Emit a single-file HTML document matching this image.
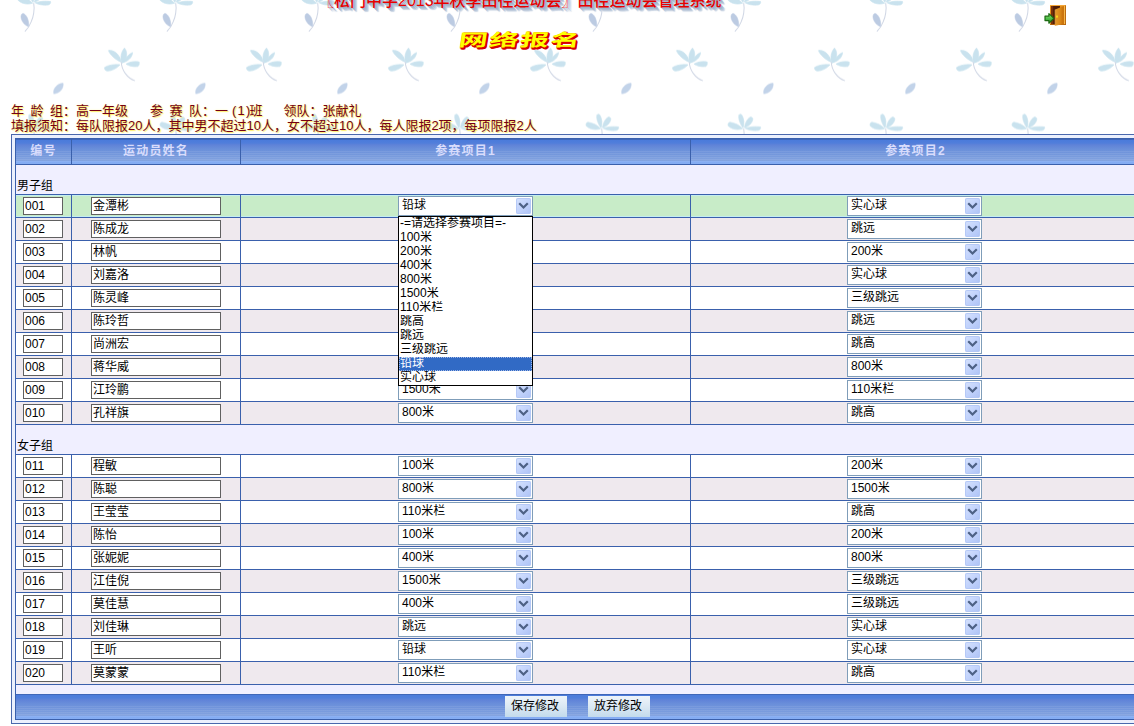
<!DOCTYPE html>
<html lang="zh-CN">
<head>
<meta charset="utf-8">
<title>网络报名</title>
<style>
html,body{margin:0;padding:0;}
body{width:1134px;height:726px;overflow:hidden;position:relative;background:#fff;
 font-family:"Liberation Sans","Noto Sans CJK SC","WenQuanYi Zen Hei",sans-serif;font-size:12px;color:#000;}
#bg{position:absolute;left:0;top:0;width:1134px;height:726px;z-index:0;}
#sys{position:absolute;left:318px;top:-9.5px;font-size:16px;font-weight:500;line-height:20px;white-space:nowrap;color:#e60000;
 text-shadow:1px 1px 0 #9fb0c8,2px 2px 0 #a9b9cf,3px 3px 0 #b7c5d8,4px 4px 1px #c8d3e2;z-index:2;}
#ttl{position:absolute;left:457px;top:29px;height:24px;z-index:2;white-space:nowrap;
 font-family:"Liberation Sans","Noto Sans CJK SC",sans-serif;font-weight:700;font-size:17px;line-height:24px;color:#ffff00;
 text-shadow:0.6px 1px 0 #d80000,1.2px 2px 0 #d40000,1.2px 1px 0 #d80000,0.6px 2px 0 #d80000,0.6px 0 0 #e02000,0 1px 0 #e02000;letter-spacing:1px;}
#ttl span{display:inline-block;transform:skewX(-9deg) scaleX(1.7);transform-origin:0 100%;}
#door{position:absolute;left:1043px;top:3px;z-index:2;}
.info{position:absolute;left:11px;white-space:nowrap;font-size:13px;line-height:15px;color:#740014;z-index:2;
 text-shadow:1px 1px 1px #ffee66,0 0 2px #fff7a8;}
.info i{font-style:normal;position:absolute;top:0;}
#i1{top:103px;height:15px;}
#i2{top:118px;height:15px;}
#box{position:absolute;left:11px;top:134px;width:1200px;height:588px;border:1px solid #4a68ad;background:#ebf0fd;z-index:1;}
table{position:absolute;left:3px;top:3px;border-collapse:separate;border-spacing:1px;background:#3a60ac;table-layout:fixed;width:1126px;}
td,th{padding:0;margin:0;overflow:hidden;}
th{height:25px;font-size:12px;font-weight:bold;color:#d8dcfc;text-align:center;vertical-align:middle;
 background-image:repeating-linear-gradient(to bottom,rgba(255,255,255,0) 0,rgba(255,255,255,0) 1px,rgba(255,255,255,.08) 1px,rgba(255,255,255,.08) 2px),linear-gradient(to bottom,#3f66b8 0,#3f66b8 1px,#4b7bdb 1px,#507edb 4px,#6083d8 6px,#6a8fda 10px,#7598dc 16px,#84a4e0 22px,#82aaf2 22.5px,#86aef4 25px);
 background-size:100% 12px,100% 100%;background-position:0 11px,0 0;background-repeat:no-repeat,no-repeat;}
th span{position:relative;top:-2.5px;letter-spacing:1.2px;}
tr.g td{height:29px;background:#f0efff;vertical-align:bottom;text-align:left;}
tr.g td span{display:block;padding-left:1px;line-height:15px;height:15px;}
tr.r td{height:22px;text-align:center;vertical-align:middle;}
tr.hl td{background:#c8ecc8;box-shadow:inset 0 1px 0 #c4edf0,inset 0 -1px 0 #c4edf0;}
tr.odd td{background:#efe9ee;}
tr.even td{background:#fff;}
input{box-sizing:border-box;height:18px;border:1px solid #606060;background:#fff;padding:0 0 0 1px;margin:0;display:block;
 font-family:"Liberation Sans","Noto Sans CJK SC","WenQuanYi Zen Hei",sans-serif;font-size:12px;line-height:16px;color:#000;outline:none;border-radius:0;}
input.no{width:40px;margin-left:7px;}
input.nm{width:130px;margin-left:19px;padding-bottom:4px;}
.sel{box-sizing:border-box;width:135px;height:20px;border:1px solid #7f9db9;background:#fff;margin:0 0 0 157px;position:relative;text-align:left;}
td.c4 .sel{margin-left:156px;}
.sv{position:absolute;left:3px;top:0px;line-height:16px;font-size:12px;white-space:nowrap;}
.sb{position:absolute;right:1px;top:1px;width:15px;height:16px;border-radius:2px;
 background:linear-gradient(135deg,#d6e2fd 0%,#c2d3fc 50%,#adc2f5 100%);box-shadow:inset 0 0 0 1px rgba(180,200,246,.9);}
.sb svg{display:block;}
tr.f td{height:34px;background:#f0efff;position:relative;}
#fg{position:absolute;left:0;right:0;bottom:0;height:25px;
 background-image:repeating-linear-gradient(to bottom,rgba(255,255,255,0) 0,rgba(255,255,255,0) 1px,rgba(255,255,255,.08) 1px,rgba(255,255,255,.08) 2px),linear-gradient(to bottom,#3f66b8 0,#3f66b8 1px,#4b7bdb 1px,#507edb 4px,#6083d8 6px,#6a8fda 10px,#7598dc 16px,#84a4e0 22px,#82aaf2 22.5px,#86aef4 25px);
 background-size:100% 12px,100% 100%;background-position:0 11px,0 0;background-repeat:no-repeat,no-repeat;}
.btn{position:absolute;top:2px;width:62px;height:21px;line-height:20px;text-align:center;box-sizing:border-box;padding-right:2px;font-size:12px;color:#000;
 background:linear-gradient(to bottom,#eef4fa 0%,#dbe8f3 50%,#c3dbec 100%);}
#dd{position:absolute;left:398px;top:216px;width:133px;height:168px;border:1px solid #000;background:#fff;z-index:5;}
#dd .o{height:14px;line-height:13px;font-size:12px;padding-left:1px;white-space:nowrap;overflow:hidden;}
#dd .on{background:#316ac5;color:#fff;outline:1px dotted #9fb6e6;outline-offset:-1px;}
</style>
</head>
<body>
<svg id="bg" width="1134" height="726" viewBox="0 0 1134 726">
 <defs>
  <pattern id="fl" x="0" y="0" width="142" height="125.5" patternUnits="userSpaceOnUse">
   <g fill="#c9e2ee" stroke="#c9e2ee" stroke-width="0.7" stroke-linejoin="round"><path d="M 32.5 3.2 C 28 4.8 22 4 18.3 0.5 C 17.5 -1.5 18.5 -3 20 -3.2 C 25 -2.5 30 0 32.5 3.2 Z"/><path d="M 33 2.5 C 30 -2 28 -7 29 -10.5 C 29.5 -11.5 31 -11.5 31.8 -10.5 C 34 -7 34.5 -2 33 2.5 Z"/><path d="M 34.5 2.2 C 35 -2 37 -6.5 40 -8.2 C 41.5 -8.8 43 -7.5 42.8 -6 C 42 -2 38.5 1 34.5 2.2 Z"/><path d="M 35.2 2.8 C 39 1.2 46 0.8 50.5 1.5 C 51 3 50 4.5 48 5 C 43 5.5 38 4.5 35.2 2.8 Z"/></g><path d="M 33.7 3.2 C 34.8 9 33.5 17 31.3 21.5 C 30 25 28 28.5 24.9 31.5" fill="none" stroke="#cfd6e4" stroke-width="1"/><path d="M 23.2 13.4 C 26 14 29.5 20 28.6 26.5 C 25 26 20.5 20.5 21 16 C 21.2 14.5 22 13.5 23.2 13.4 Z" fill="#bccbe2" stroke="#bccbe2" stroke-width="0.5"/>
   <g fill="#c9e2ee" stroke="#c9e2ee" stroke-width="0.7" stroke-linejoin="round"><path d="M 32.5 128.7 C 28 130.3 22 129.5 18.3 126 C 17.5 124 18.5 122.5 20 122.3 C 25 123 30 125.5 32.5 128.7 Z"/><path d="M 33 128 C 30 123.5 28 118.5 29 115 C 29.5 114 31 114 31.8 115 C 34 118.5 34.5 123.5 33 128 Z"/><path d="M 34.5 127.7 C 35 123.5 37 119 40 117.3 C 41.5 116.7 43 118 42.8 119.5 C 42 123.5 38.5 126.5 34.5 127.7 Z"/><path d="M 35.2 128.3 C 39 126.7 46 126.3 50.5 127 C 51 128.5 50 130 48 130.5 C 43 131 38 130 35.2 128.3 Z"/></g><path d="M 33.7 128.7 C 34.8 134.5 33.5 142.5 31.3 147 C 30 150.5 28 154 24.9 157" fill="none" stroke="#cfd6e4" stroke-width="1"/><path d="M 23.2 138.9 C 26 139.5 29.5 145.5 28.6 152 C 25 151.5 20.5 146 21 141.5 C 21.2 140 22 139 23.2 138.9 Z" fill="#bccbe2" stroke="#bccbe2" stroke-width="0.5"/>
   <g fill="#c9e2ee" stroke="#c9e2ee" stroke-width="0.7" stroke-linejoin="round">
    <path d="M121 62 C116 60 110 55 108.5 50.5 C113 49.5 120 54 121 62Z"/>
    <path d="M122 63 C120 58 121 52 124.5 48 C127 51 127.5 56 125 60 C124 62 123 63 122 63Z"/>
    <path d="M123 62.5 C125 58 129 54 132.5 52.5 C132.5 57 128 61.5 123 62.5Z"/>
    <path d="M126 64 C130 61.5 136 61 139.2 62 C139.5 64 139 66 137.5 66.5 C133 67 129 66 126 64Z"/>
    <path d="M120 64.8 C115 64 108 65 104.5 67.5 C104.5 69.5 105.5 71 107.5 71 C112 71 117 68 120 64.8Z"/>
   </g>
   <path d="M121.3 62 C121.5 70 127 78 135 80.8" fill="none" stroke="#cfd6e4" stroke-width="1"/>
   <path d="M53.8 93.8 C52.5 89 57 83.5 63.1 83.2 C64 88 60 93.5 53.8 93.8Z" fill="#c2d3e9" stroke="#c2d3e9" stroke-width="0.5"/>
  </pattern>
 </defs>
 <rect x="0" y="0" width="1134" height="726" fill="#ffffff"/>
 <rect x="0" y="0" width="1134" height="726" fill="url(#fl)"/>
</svg>

<div id="sys">〖松门中学2013年秋季田径运动会〗田径运动会管理系统</div>
<div id="ttl"><span>网络报名</span></div>

<svg id="door" width="24" height="24" viewBox="0 0 24 24">
 <defs>
  <linearGradient id="dg" x1="0" y1="0" x2="1" y2="0"><stop offset="0" stop-color="#e59a2c"/><stop offset="0.6" stop-color="#d98716"/><stop offset="1" stop-color="#c26a08"/></linearGradient>
  <linearGradient id="ag" x1="0" y1="0" x2="0" y2="1"><stop offset="0" stop-color="#9be873"/><stop offset="0.5" stop-color="#4fc04a"/><stop offset="1" stop-color="#2c9428"/></linearGradient>
 </defs>
 <rect x="7" y="2" width="16" height="20" fill="#e38d1c"/>
 <rect x="7" y="2" width="16" height="1" fill="#f3a637"/>
 <rect x="8" y="3" width="9" height="18.5" fill="#4e1d06"/>
 <rect x="8" y="3" width="2.2" height="18.5" fill="#7a2f0a"/>
 <rect x="21" y="3" width="1.3" height="18" fill="#f8b84a"/>
 <rect x="22.3" y="2.5" width="0.7" height="19.5" fill="#a85a08"/>
 <rect x="7" y="21.2" width="16" height="0.8" fill="#b4620a"/>
 <path d="M12.2 6.6 L20.8 3 L20.8 21 L12.2 22.8Z" fill="url(#dg)"/>
 <path d="M12.2 6.6 L12.2 22.8" stroke="#e9a540" stroke-width="0.8" fill="none"/>
 <rect x="13.2" y="12.6" width="1.6" height="2" fill="#ffe81a"/>
 <path d="M2 13.2 L5.9 13.2 L5.9 10.6 L10.9 15.4 L5.9 20.2 L5.9 17.6 L2 17.6Z" fill="url(#ag)" stroke="#1c6a12" stroke-width="1.2" stroke-linejoin="round"/>
</svg>

<div class="info" id="i1"><i style="left:0">年</i><i style="left:19.5px">龄</i><i style="left:39px">组：</i><i style="left:65px">高一年级</i><i style="left:139px">参</i><i style="left:158.5px">赛</i><i style="left:178px">队：</i><i style="left:204px">一</i><i style="left:221px;letter-spacing:1.2px">(1)</i><i style="left:238.5px">班</i><i style="left:272.5px">领队：</i><i style="left:311.5px">张献礼</i></div>
<div class="info" id="i2">填报须知：每队限报20人，其中男不超过10人，女不超过10人，每人限报2项，每项限报2人</div>

<div id="box">
<table cellspacing="1" cellpadding="0">
<colgroup><col style="width:55px"><col style="width:168px"><col style="width:449px"><col style="width:449px"></colgroup>
<tr><th><span>编号</span></th><th><span>运动员姓名</span></th><th><span>参赛项目1</span></th><th><span>参赛项目2</span></th></tr>
<tr class="g"><td colspan="4"><span>男子组</span></td></tr>
<tr class="r hl"><td><input class="no" type="text" value="001" readonly></td><td><input class="nm" type="text" value="金潭彬" readonly></td><td><div class="sel"><span class="sv">铅球</span><span class="sb"><svg width="15" height="16" viewBox="0 0 15 16"><path d="M4 6 L7.5 9.5 L11 6" fill="none" stroke="#4D6185" stroke-width="2.2" stroke-linecap="square"/></svg></span></div></td><td class="c4"><div class="sel"><span class="sv">实心球</span><span class="sb"><svg width="15" height="16" viewBox="0 0 15 16"><path d="M4 6 L7.5 9.5 L11 6" fill="none" stroke="#4D6185" stroke-width="2.2" stroke-linecap="square"/></svg></span></div></td></tr>
<tr class="r odd"><td><input class="no" type="text" value="002" readonly></td><td><input class="nm" type="text" value="陈成龙" readonly></td><td><div class="sel"><span class="sv"></span><span class="sb"><svg width="15" height="16" viewBox="0 0 15 16"><path d="M4 6 L7.5 9.5 L11 6" fill="none" stroke="#4D6185" stroke-width="2.2" stroke-linecap="square"/></svg></span></div></td><td class="c4"><div class="sel"><span class="sv">跳远</span><span class="sb"><svg width="15" height="16" viewBox="0 0 15 16"><path d="M4 6 L7.5 9.5 L11 6" fill="none" stroke="#4D6185" stroke-width="2.2" stroke-linecap="square"/></svg></span></div></td></tr>
<tr class="r even"><td><input class="no" type="text" value="003" readonly></td><td><input class="nm" type="text" value="林帆" readonly></td><td><div class="sel"><span class="sv"></span><span class="sb"><svg width="15" height="16" viewBox="0 0 15 16"><path d="M4 6 L7.5 9.5 L11 6" fill="none" stroke="#4D6185" stroke-width="2.2" stroke-linecap="square"/></svg></span></div></td><td class="c4"><div class="sel"><span class="sv">200米</span><span class="sb"><svg width="15" height="16" viewBox="0 0 15 16"><path d="M4 6 L7.5 9.5 L11 6" fill="none" stroke="#4D6185" stroke-width="2.2" stroke-linecap="square"/></svg></span></div></td></tr>
<tr class="r odd"><td><input class="no" type="text" value="004" readonly></td><td><input class="nm" type="text" value="刘嘉洛" readonly></td><td><div class="sel"><span class="sv"></span><span class="sb"><svg width="15" height="16" viewBox="0 0 15 16"><path d="M4 6 L7.5 9.5 L11 6" fill="none" stroke="#4D6185" stroke-width="2.2" stroke-linecap="square"/></svg></span></div></td><td class="c4"><div class="sel"><span class="sv">实心球</span><span class="sb"><svg width="15" height="16" viewBox="0 0 15 16"><path d="M4 6 L7.5 9.5 L11 6" fill="none" stroke="#4D6185" stroke-width="2.2" stroke-linecap="square"/></svg></span></div></td></tr>
<tr class="r even"><td><input class="no" type="text" value="005" readonly></td><td><input class="nm" type="text" value="陈灵峰" readonly></td><td><div class="sel"><span class="sv"></span><span class="sb"><svg width="15" height="16" viewBox="0 0 15 16"><path d="M4 6 L7.5 9.5 L11 6" fill="none" stroke="#4D6185" stroke-width="2.2" stroke-linecap="square"/></svg></span></div></td><td class="c4"><div class="sel"><span class="sv">三级跳远</span><span class="sb"><svg width="15" height="16" viewBox="0 0 15 16"><path d="M4 6 L7.5 9.5 L11 6" fill="none" stroke="#4D6185" stroke-width="2.2" stroke-linecap="square"/></svg></span></div></td></tr>
<tr class="r odd"><td><input class="no" type="text" value="006" readonly></td><td><input class="nm" type="text" value="陈玲哲" readonly></td><td><div class="sel"><span class="sv"></span><span class="sb"><svg width="15" height="16" viewBox="0 0 15 16"><path d="M4 6 L7.5 9.5 L11 6" fill="none" stroke="#4D6185" stroke-width="2.2" stroke-linecap="square"/></svg></span></div></td><td class="c4"><div class="sel"><span class="sv">跳远</span><span class="sb"><svg width="15" height="16" viewBox="0 0 15 16"><path d="M4 6 L7.5 9.5 L11 6" fill="none" stroke="#4D6185" stroke-width="2.2" stroke-linecap="square"/></svg></span></div></td></tr>
<tr class="r even"><td><input class="no" type="text" value="007" readonly></td><td><input class="nm" type="text" value="尚洲宏" readonly></td><td><div class="sel"><span class="sv"></span><span class="sb"><svg width="15" height="16" viewBox="0 0 15 16"><path d="M4 6 L7.5 9.5 L11 6" fill="none" stroke="#4D6185" stroke-width="2.2" stroke-linecap="square"/></svg></span></div></td><td class="c4"><div class="sel"><span class="sv">跳高</span><span class="sb"><svg width="15" height="16" viewBox="0 0 15 16"><path d="M4 6 L7.5 9.5 L11 6" fill="none" stroke="#4D6185" stroke-width="2.2" stroke-linecap="square"/></svg></span></div></td></tr>
<tr class="r odd"><td><input class="no" type="text" value="008" readonly></td><td><input class="nm" type="text" value="蒋华威" readonly></td><td><div class="sel"><span class="sv"></span><span class="sb"><svg width="15" height="16" viewBox="0 0 15 16"><path d="M4 6 L7.5 9.5 L11 6" fill="none" stroke="#4D6185" stroke-width="2.2" stroke-linecap="square"/></svg></span></div></td><td class="c4"><div class="sel"><span class="sv">800米</span><span class="sb"><svg width="15" height="16" viewBox="0 0 15 16"><path d="M4 6 L7.5 9.5 L11 6" fill="none" stroke="#4D6185" stroke-width="2.2" stroke-linecap="square"/></svg></span></div></td></tr>
<tr class="r even"><td><input class="no" type="text" value="009" readonly></td><td><input class="nm" type="text" value="江玲鹏" readonly></td><td><div class="sel"><span class="sv">1500米</span><span class="sb"><svg width="15" height="16" viewBox="0 0 15 16"><path d="M4 6 L7.5 9.5 L11 6" fill="none" stroke="#4D6185" stroke-width="2.2" stroke-linecap="square"/></svg></span></div></td><td class="c4"><div class="sel"><span class="sv">110米栏</span><span class="sb"><svg width="15" height="16" viewBox="0 0 15 16"><path d="M4 6 L7.5 9.5 L11 6" fill="none" stroke="#4D6185" stroke-width="2.2" stroke-linecap="square"/></svg></span></div></td></tr>
<tr class="r odd"><td><input class="no" type="text" value="010" readonly></td><td><input class="nm" type="text" value="孔祥旗" readonly></td><td><div class="sel"><span class="sv">800米</span><span class="sb"><svg width="15" height="16" viewBox="0 0 15 16"><path d="M4 6 L7.5 9.5 L11 6" fill="none" stroke="#4D6185" stroke-width="2.2" stroke-linecap="square"/></svg></span></div></td><td class="c4"><div class="sel"><span class="sv">跳高</span><span class="sb"><svg width="15" height="16" viewBox="0 0 15 16"><path d="M4 6 L7.5 9.5 L11 6" fill="none" stroke="#4D6185" stroke-width="2.2" stroke-linecap="square"/></svg></span></div></td></tr>
<tr class="g"><td colspan="4"><span>女子组</span></td></tr>
<tr class="r even"><td><input class="no" type="text" value="011" readonly></td><td><input class="nm" type="text" value="程敏" readonly></td><td><div class="sel"><span class="sv">100米</span><span class="sb"><svg width="15" height="16" viewBox="0 0 15 16"><path d="M4 6 L7.5 9.5 L11 6" fill="none" stroke="#4D6185" stroke-width="2.2" stroke-linecap="square"/></svg></span></div></td><td class="c4"><div class="sel"><span class="sv">200米</span><span class="sb"><svg width="15" height="16" viewBox="0 0 15 16"><path d="M4 6 L7.5 9.5 L11 6" fill="none" stroke="#4D6185" stroke-width="2.2" stroke-linecap="square"/></svg></span></div></td></tr>
<tr class="r odd"><td><input class="no" type="text" value="012" readonly></td><td><input class="nm" type="text" value="陈聪" readonly></td><td><div class="sel"><span class="sv">800米</span><span class="sb"><svg width="15" height="16" viewBox="0 0 15 16"><path d="M4 6 L7.5 9.5 L11 6" fill="none" stroke="#4D6185" stroke-width="2.2" stroke-linecap="square"/></svg></span></div></td><td class="c4"><div class="sel"><span class="sv">1500米</span><span class="sb"><svg width="15" height="16" viewBox="0 0 15 16"><path d="M4 6 L7.5 9.5 L11 6" fill="none" stroke="#4D6185" stroke-width="2.2" stroke-linecap="square"/></svg></span></div></td></tr>
<tr class="r even"><td><input class="no" type="text" value="013" readonly></td><td><input class="nm" type="text" value="王莹莹" readonly></td><td><div class="sel"><span class="sv">110米栏</span><span class="sb"><svg width="15" height="16" viewBox="0 0 15 16"><path d="M4 6 L7.5 9.5 L11 6" fill="none" stroke="#4D6185" stroke-width="2.2" stroke-linecap="square"/></svg></span></div></td><td class="c4"><div class="sel"><span class="sv">跳高</span><span class="sb"><svg width="15" height="16" viewBox="0 0 15 16"><path d="M4 6 L7.5 9.5 L11 6" fill="none" stroke="#4D6185" stroke-width="2.2" stroke-linecap="square"/></svg></span></div></td></tr>
<tr class="r odd"><td><input class="no" type="text" value="014" readonly></td><td><input class="nm" type="text" value="陈怡" readonly></td><td><div class="sel"><span class="sv">100米</span><span class="sb"><svg width="15" height="16" viewBox="0 0 15 16"><path d="M4 6 L7.5 9.5 L11 6" fill="none" stroke="#4D6185" stroke-width="2.2" stroke-linecap="square"/></svg></span></div></td><td class="c4"><div class="sel"><span class="sv">200米</span><span class="sb"><svg width="15" height="16" viewBox="0 0 15 16"><path d="M4 6 L7.5 9.5 L11 6" fill="none" stroke="#4D6185" stroke-width="2.2" stroke-linecap="square"/></svg></span></div></td></tr>
<tr class="r even"><td><input class="no" type="text" value="015" readonly></td><td><input class="nm" type="text" value="张妮妮" readonly></td><td><div class="sel"><span class="sv">400米</span><span class="sb"><svg width="15" height="16" viewBox="0 0 15 16"><path d="M4 6 L7.5 9.5 L11 6" fill="none" stroke="#4D6185" stroke-width="2.2" stroke-linecap="square"/></svg></span></div></td><td class="c4"><div class="sel"><span class="sv">800米</span><span class="sb"><svg width="15" height="16" viewBox="0 0 15 16"><path d="M4 6 L7.5 9.5 L11 6" fill="none" stroke="#4D6185" stroke-width="2.2" stroke-linecap="square"/></svg></span></div></td></tr>
<tr class="r odd"><td><input class="no" type="text" value="016" readonly></td><td><input class="nm" type="text" value="江佳倪" readonly></td><td><div class="sel"><span class="sv">1500米</span><span class="sb"><svg width="15" height="16" viewBox="0 0 15 16"><path d="M4 6 L7.5 9.5 L11 6" fill="none" stroke="#4D6185" stroke-width="2.2" stroke-linecap="square"/></svg></span></div></td><td class="c4"><div class="sel"><span class="sv">三级跳远</span><span class="sb"><svg width="15" height="16" viewBox="0 0 15 16"><path d="M4 6 L7.5 9.5 L11 6" fill="none" stroke="#4D6185" stroke-width="2.2" stroke-linecap="square"/></svg></span></div></td></tr>
<tr class="r even"><td><input class="no" type="text" value="017" readonly></td><td><input class="nm" type="text" value="莫佳慧" readonly></td><td><div class="sel"><span class="sv">400米</span><span class="sb"><svg width="15" height="16" viewBox="0 0 15 16"><path d="M4 6 L7.5 9.5 L11 6" fill="none" stroke="#4D6185" stroke-width="2.2" stroke-linecap="square"/></svg></span></div></td><td class="c4"><div class="sel"><span class="sv">三级跳远</span><span class="sb"><svg width="15" height="16" viewBox="0 0 15 16"><path d="M4 6 L7.5 9.5 L11 6" fill="none" stroke="#4D6185" stroke-width="2.2" stroke-linecap="square"/></svg></span></div></td></tr>
<tr class="r odd"><td><input class="no" type="text" value="018" readonly></td><td><input class="nm" type="text" value="刘佳琳" readonly></td><td><div class="sel"><span class="sv">跳远</span><span class="sb"><svg width="15" height="16" viewBox="0 0 15 16"><path d="M4 6 L7.5 9.5 L11 6" fill="none" stroke="#4D6185" stroke-width="2.2" stroke-linecap="square"/></svg></span></div></td><td class="c4"><div class="sel"><span class="sv">实心球</span><span class="sb"><svg width="15" height="16" viewBox="0 0 15 16"><path d="M4 6 L7.5 9.5 L11 6" fill="none" stroke="#4D6185" stroke-width="2.2" stroke-linecap="square"/></svg></span></div></td></tr>
<tr class="r even"><td><input class="no" type="text" value="019" readonly></td><td><input class="nm" type="text" value="王听" readonly></td><td><div class="sel"><span class="sv">铅球</span><span class="sb"><svg width="15" height="16" viewBox="0 0 15 16"><path d="M4 6 L7.5 9.5 L11 6" fill="none" stroke="#4D6185" stroke-width="2.2" stroke-linecap="square"/></svg></span></div></td><td class="c4"><div class="sel"><span class="sv">实心球</span><span class="sb"><svg width="15" height="16" viewBox="0 0 15 16"><path d="M4 6 L7.5 9.5 L11 6" fill="none" stroke="#4D6185" stroke-width="2.2" stroke-linecap="square"/></svg></span></div></td></tr>
<tr class="r odd"><td><input class="no" type="text" value="020" readonly></td><td><input class="nm" type="text" value="莫蒙蒙" readonly></td><td><div class="sel"><span class="sv">110米栏</span><span class="sb"><svg width="15" height="16" viewBox="0 0 15 16"><path d="M4 6 L7.5 9.5 L11 6" fill="none" stroke="#4D6185" stroke-width="2.2" stroke-linecap="square"/></svg></span></div></td><td class="c4"><div class="sel"><span class="sv">跳高</span><span class="sb"><svg width="15" height="16" viewBox="0 0 15 16"><path d="M4 6 L7.5 9.5 L11 6" fill="none" stroke="#4D6185" stroke-width="2.2" stroke-linecap="square"/></svg></span></div></td></tr>

<tr class="f"><td colspan="4"><div id="fg"><div class="btn" style="left:489px">保存修改</div><div class="btn" style="left:572px">放弃修改</div></div></td></tr>
</table>
</div>

<div id="dd"><div class="o">-=请选择参赛项目=-</div><div class="o">100米</div><div class="o">200米</div><div class="o">400米</div><div class="o">800米</div><div class="o">1500米</div><div class="o">110米栏</div><div class="o">跳高</div><div class="o">跳远</div><div class="o">三级跳远</div><div class="o on">铅球</div><div class="o">实心球</div></div>
</body>
</html>
